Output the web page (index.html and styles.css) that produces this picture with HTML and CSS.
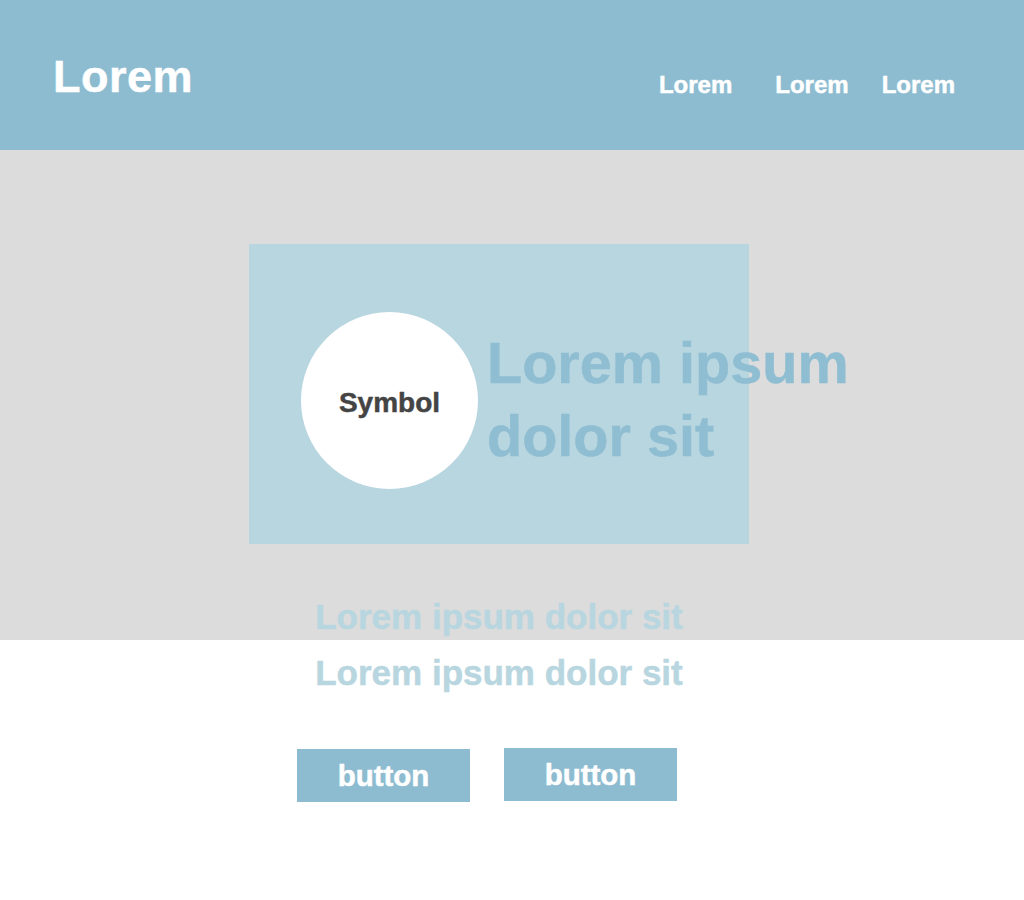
FILE: index.html
```html
<!DOCTYPE html>
<html lang="en">
<head>
<meta charset="utf-8">
<title>Lorem</title>
<link rel="stylesheet" href="styles.css">
</head>
<body>
<header class="site-header">
  <div class="logo">Lorem</div>
  <nav class="nav">
    <a class="nav-link nav-link-first" href="#">Lorem</a>
    <a class="nav-link" href="#">Lorem</a>
    <a class="nav-link" href="#">Lorem</a>
  </nav>
</header>
<section class="hero">
  <div class="wrap">
    <div class="card">
      <div class="symbol"><span class="symbol-text">Symbol</span></div>
      <h1 class="headline">Lorem ipsum<br>dolor sit</h1>
    </div>
    <p class="sub sub-hero">Lorem ipsum dolor sit</p>
  </div>
</section>
<section class="content">
  <div class="wrap">
    <p class="sub sub-content">Lorem ipsum dolor sit</p>
    <div class="buttons">
      <a class="btn" href="#">button</a>
      <a class="btn btn-second" href="#">button</a>
    </div>
  </div>
</section>
</body>
</html>
```

FILE: styles.css
```css
* { box-sizing: border-box; }
html, body { margin: 0; padding: 0; }
body {
  font-family: "Liberation Sans", Arial, sans-serif;
  font-weight: 700;
  background: #ffffff;
  -webkit-text-stroke: 0.03em currentColor;
}
a { text-decoration: none; }
p, h1 { margin: 0; }

.site-header {
  height: 150px;
  background: #8dbcd1;
  display: flex;
  align-items: baseline;
  padding: 54px 69px 0 53px;
}
.logo {
  font-size: 45px;
  line-height: 1;
  color: #ffffff;
  letter-spacing: 0.5px;
}
.nav {
  margin-left: auto;
  display: flex;
  align-items: baseline;
  gap: 33px;
}
.nav-link {
  font-size: 24px;
  line-height: 1;
  color: #ffffff;
  position: relative;
  top: 1px;
}
.nav-link-first { margin-right: 10px; }

.hero {
  background: #dcdcdc;
  height: 490px;
  padding-top: 94px;
}
.wrap {
  width: 500px;
  margin-left: 249px;
}
.card {
  width: 500px;
  height: 300px;
  background: #b8d6e0;
  display: flex;
  align-items: flex-start;
  padding: 68px 0 0 52px;
}
.symbol {
  width: 177px;
  height: 177px;
  flex: none;
  border-radius: 50%;
  background: #ffffff;
  display: flex;
  align-items: center;
  justify-content: center;
  padding-top: 4px;
}
.symbol-text {
  font-size: 28px;
  line-height: 1;
  color: #444444;
}
.headline {
  margin: 15px 0 0 9px;
  font-size: 57.6px;
  line-height: 73px;
  font-weight: 700;
  color: #8fbdd2;
  white-space: nowrap;
}
.sub {
  font-size: 35px;
  line-height: 1;
  color: #b8d6e0;
  text-align: center;
  white-space: nowrap;
}
.sub-hero { margin-top: 55px; }
.sub-content { padding-top: 15px; }

.buttons {
  display: flex;
  align-items: flex-start;
  gap: 34px;
  padding-left: 48px;
  margin-top: 59px;
}
.btn {
  width: 173px;
  height: 53px;
  background: #8dbcd1;
  color: #ffffff;
  font-size: 29.5px;
  line-height: 1;
  display: flex;
  align-items: center;
  justify-content: center;
}
.btn-second { margin-top: -1px; }
```
